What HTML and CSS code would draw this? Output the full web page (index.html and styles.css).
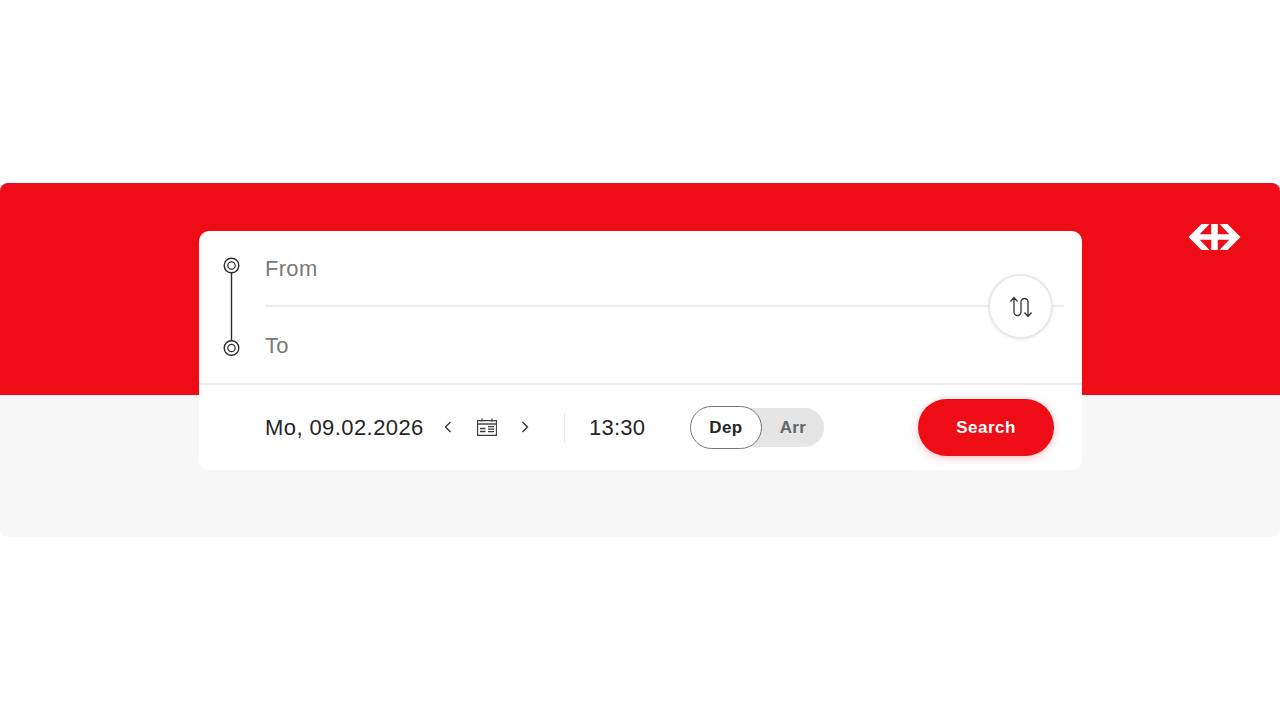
FILE: index.html
```html
<!DOCTYPE html>
<html lang="en">
<head>
<meta charset="utf-8">
<title>Timetable</title>
<link rel="stylesheet" href="styles.css">
</head>
<body>
<main class="hero">
  <svg class="logo" viewBox="0 0 52 26" aria-hidden="true">
    <path fill="#fff" d="M0 13 13 0h8l-9.800 10.200h11.550V0h6.500v10.200H40.800L31 0h8l13 13-13 13h-8l9.800-10.200H29.250V26h-6.500V15.800H11.200L21 26h-8z"/>
  </svg>
  <section class="card">
    <div class="route">
      <svg class="route-icon" viewBox="0 0 17 100" aria-hidden="true">
        <g fill="none" stroke="#2d2d2d">
          <circle cx="8.500" cy="9.500" r="7.300" stroke-width="1.400"/>
          <circle cx="8.500" cy="9.500" r="3.700" stroke-width="1.200"/>
          <path d="M8.500 16.800v68" stroke-width="1.400"/>
          <circle cx="8.500" cy="92" r="7.300" stroke-width="1.400"/>
          <circle cx="8.500" cy="92" r="3.700" stroke-width="1.200"/>
        </g>
      </svg>
      <div class="fields">
        <div class="field field-from">From</div>
        <div class="field field-to">To</div>
        <button class="swap" type="button" aria-label="Swap">
          <svg class="swap-icon" viewBox="0 0 24 24" aria-hidden="true">
            <path fill="none" stroke="#333" stroke-width="1.300" d="M1.500 6.500 5 2.500l3.500 4M5 2.500V17a3.500 3.500 0 0 0 7 0V7a3.500 3.500 0 0 1 7 0v14.500M15.500 17.500l3.500 4 3.500-4"/>
          </svg>
        </button>
      </div>
    </div>
    <div class="controls">
      <span class="date">Mo, 09.02.2026</span>
      <svg class="chevron chevron-prev" viewBox="0 0 8 12" aria-hidden="true"><path d="M6.500 1 1.500 6l5 5"/></svg>
      <svg class="calendar" viewBox="0 0 20 18" aria-hidden="true">
        <g fill="none" stroke="#3a3a3a">
          <path stroke-width="1.100" d="M.6 2.600h18.800v14.800H.6zM5 .3v3.500M15 .3v3.500"/>
          <path stroke-width="1.400" d="M.6 6h18.800"/>
          <path stroke-width="1.300" d="M3 10.500h5.500M3 13.500h5.500M11 8.700h6M11 11.200h6M11 13.700h6"/>
        </g>
      </svg>
      <svg class="chevron chevron-next" viewBox="0 0 8 12" aria-hidden="true"><path d="M1.500 1l5 5-5 5"/></svg>
      <span class="divider"></span>
      <span class="time">13:30</span>
      <div class="toggle">
        <span class="toggle-on">Dep</span>
        <span class="toggle-off">Arr</span>
      </div>
      <button class="search" type="button">Search</button>
    </div>
  </section>
</main>
</body>
</html>
```
FILE: styles.css
```css
* { box-sizing: border-box; }
html, body { margin: 0; background: #fff; }
body {
  padding: 183px 0;
  font-family: "Liberation Sans", Arial, sans-serif;
  color: #262626;
}
.hero {
  position: relative;
  height: 354px;
  padding: 48px 198px 0 199px;
  border-radius: 8px;
  background: linear-gradient(#ee0d17 212px, #f7f7f7 212px);
}
.logo {
  position: absolute;
  top: 41px;
  left: 1188px;
  width: 53px;
  height: 26px;
}
.card {
  height: 239px;
  border-radius: 10px;
  background: #fff;
}
.route {
  display: flex;
  height: 154px;
  padding: 25px 18px 0 24px;
  border-bottom: 2px solid #ececec;
}
.route-icon {
  flex: none;
  width: 17px;
  height: 100px;
}
.fields {
  position: relative;
  flex: 1;
  margin-top: -25px;
  margin-left: 25px;
}
.field {
  display: flex;
  align-items: center;
  font-size: 22px;
  letter-spacing: .3px;
  color: #7a7a7a;
}
.field-from {
  height: 76px;
  padding-top: 1px;
  border-bottom: 2px solid #ececec;
}
.field-to {
  height: 76px;
  padding-top: 2px;
}
.swap {
  position: absolute;
  top: 43px;
  right: 11px;
  width: 65px;
  height: 65px;
  padding: 0;
  display: flex;
  align-items: center;
  justify-content: center;
  border: 2px solid #e8e8e8;
  border-radius: 50%;
  background: #fff;
  box-shadow: 0 1px 4px rgba(0, 0, 0, .06);
}
.swap-icon {
  width: 24px;
  height: 24px;
}
.controls {
  display: flex;
  align-items: center;
  height: 85px;
  padding-left: 66px;
}
.date {
  width: 159px;
  font-size: 22px;
  letter-spacing: .42px;
  white-space: nowrap;
}
.chevron {
  flex: none;
  width: 8px;
  height: 12px;
  margin-bottom: 1px;
  fill: none;
  stroke: #2d2d2d;
  stroke-width: 1.300;
}
.chevron-prev { margin-left: 20px; }
.calendar {
  flex: none;
  width: 20px;
  height: 18px;
  margin-left: 25px;
  margin-bottom: 1px;
}
.chevron-next { margin-left: 24px; }
.divider {
  flex: none;
  width: 1px;
  height: 28px;
  margin-left: 35px;
  background: #e5e5e5;
}
.time {
  width: 57px;
  margin-left: 24px;
  font-size: 22px;
  letter-spacing: .25px;
}
.toggle {
  display: flex;
  align-items: center;
  width: 134px;
  height: 39px;
  margin-left: 44px;
  border-radius: 20px;
  background: #e5e5e5;
  font-size: 17px;
  font-weight: 700;
  letter-spacing: .4px;
}
.toggle-on {
  display: flex;
  align-items: center;
  justify-content: center;
  width: 72px;
  height: 43px;
  border: 1px solid #767676;
  border-radius: 22px;
  background: #fff;
}
.toggle-off {
  flex: 1;
  text-align: center;
  color: #686868;
}
.search {
  width: 136px;
  height: 57px;
  margin-left: 94px;
  padding: 0;
  border: 0;
  border-radius: 29px;
  background: #ee0d17;
  box-shadow: 0 2px 8px rgba(238, 13, 23, .25);
  color: #fff;
  font: 700 17px "Liberation Sans", Arial, sans-serif;
  letter-spacing: .5px;
}
```
